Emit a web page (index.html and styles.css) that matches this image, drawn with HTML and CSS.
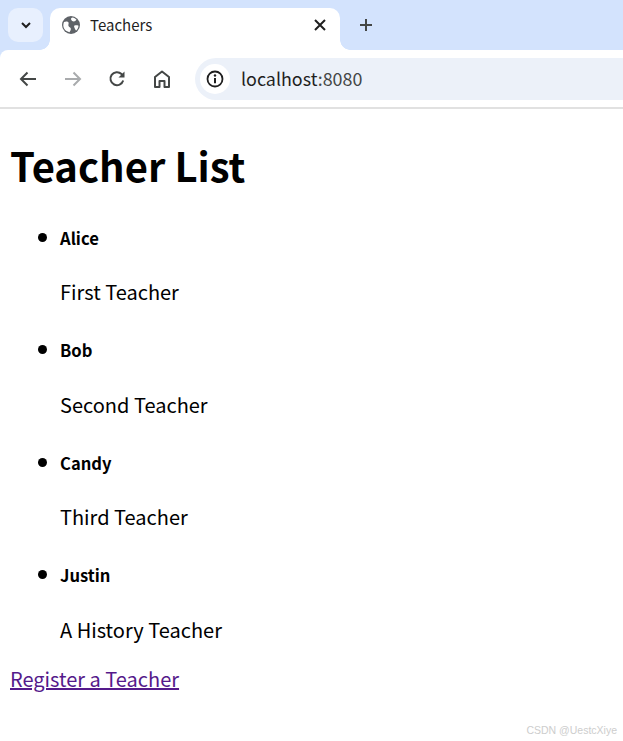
FILE: index.html
```html
<!DOCTYPE html>
<html lang="en">
<head>
<meta charset="utf-8">
<title>Teachers</title>
<link rel="stylesheet" href="styles.css">
</head>
<body>
<header class="chrome">
  <div class="tabstrip">
    <div class="tab-menu">
      <svg class="ic" width="14" height="14" viewBox="0 0 14 14"><path d="M3 5l4 4 4-4" fill="none" stroke="#1f1f1f" stroke-width="2"/></svg>
    </div>
    <div class="tab">
      <svg class="favicon" width="20" height="20" viewBox="0 0 20 20"><circle cx="10" cy="10" r="9" fill="#5f6368"/><path d="M3 7c2-1 4-.5 4.500.5S7 9.500 7.500 11s2 1 2.300 2.500-.6 2.500-1.300 3.700C5 16.500 2.500 14 2.300 10.500c0-1.300.2-2.500.7-3.500zM11.500 2.500c1.500.3 3 1.200 4 2.300-.8.800-1.500 1.700-2.700 1.700s-2.300-1-2.700-2 .4-1.700 1.400-2zM13.500 10.500c1.200-.4 2.800-.4 4 .2-.2 2-1 3.700-2.200 4.800-.8-.4-1.200-1.500-1.600-2.300s-1-2.400-.2-2.700z" fill="#fff"/></svg>
      <span class="tab-title">Teachers</span>
      <svg class="tab-close" width="12" height="12" viewBox="0 0 12 12"><path d="M1 1l10 10M11 1L1 11" stroke="#1f1f1f" stroke-width="2"/></svg>
    </div>
    <svg class="new-tab" width="14" height="14" viewBox="0 0 14 14"><path d="M7 1v12M1 7h12" stroke="#444746" stroke-width="2"/></svg>
  </div>
  <div class="toolbar">
    <svg class="tool" width="18" height="16" viewBox="0 0 18 16"><path d="M17 8H2M8.500 1.500L2 8l6.500 6.500" fill="none" stroke="#444746" stroke-width="2"/></svg>
    <svg class="tool" width="18" height="16" viewBox="0 0 18 16"><path d="M1 8h15M9.500 1.500L16 8l-6.500 6.500" fill="none" stroke="#a9abad" stroke-width="2"/></svg>
    <svg class="tool reload" width="18" height="18" viewBox="0 0 18 18"><path d="M15.200 10.500A6.500 6.500 0 1 1 13.500 4L15.500 6" fill="none" stroke="#444746" stroke-width="2"/><path d="M16.500 1.500v6h-6z" fill="#444746"/></svg>
    <svg class="tool" width="18" height="18" viewBox="0 0 18 18"><path d="M2 17V7l7-5.500L16 7v10h-4.500v-6h-5v6z" fill="none" stroke="#444746" stroke-width="2" stroke-linejoin="round"/></svg>
    <div class="omnibox">
      <span class="site-info">
        <svg width="18" height="18" viewBox="0 0 18 18"><circle cx="9" cy="9" r="7.500" fill="none" stroke="#1f1f1f" stroke-width="1.800"/><path d="M9 8v5.200" stroke="#1f1f1f" stroke-width="2"/><circle cx="9" cy="5.500" r="1.200" fill="#1f1f1f"/></svg>
      </span>
      <span class="url"><span class="host">localhost</span>:8080</span>
    </div>
  </div>
</header>
<main class="page">
  <h1>Teacher List</h1>
  <ul class="teachers">
    <li><h5>Alice</h5><p>First Teacher</p></li>
    <li><h5>Bob</h5><p>Second Teacher</p></li>
    <li><h5>Candy</h5><p>Third Teacher</p></li>
    <li><h5>Justin</h5><p>A History Teacher</p></li>
  </ul>
  <a class="register" href="#">Register a Teacher</a>
</main>
<div class="watermark">CSDN @UestcXiye</div>
</body>
</html>
```
FILE: styles.css
```css
html, body {
  margin: 0;
  padding: 0;
  background: #fff;
  height: 741px;
  overflow: hidden;
}
body {
  position: relative;
  font-family: "Noto Sans CJK SC", "Noto Sans", sans-serif;
  color: #000;
}
.chrome {
  display: block;
  border-bottom: 2px solid #e1e1e1;
  background: #d3e3fd;
}
.tabstrip {
  display: flex;
  align-items: flex-end;
  height: 50px;
}
.tab-menu {
  display: flex;
  align-items: center;
  justify-content: center;
  width: 35px;
  height: 34px;
  margin: 0 7px 8px 8px;
  border-radius: 10px;
  background: #e8f0fe;
}
.tab {
  position: relative;
  display: flex;
  align-items: center;
  width: 290px;
  height: 42px;
  box-sizing: border-box;
  padding: 0 14px 8px 11px;
  background: #fff;
  border-radius: 10px 10px 0 0;
}
.tab::before, .tab::after {
  content: "";
  position: absolute;
  bottom: 0;
  width: 10px;
  height: 10px;
}
.tab::before {
  left: -10px;
  background: radial-gradient(circle at 0 0, transparent 9.500px, #fff 10px);
}
.tab::after {
  right: -10px;
  background: radial-gradient(circle at 100% 0, transparent 9.500px, #fff 10px);
}
.favicon { flex: none; }
.tab-title {
  margin-left: 9px;
  flex: 1;
  font-size: 15px;
  line-height: 20px;
  color: #1f1f1f;
}
.new-tab { margin: 0 0 18px 19px; }
.toolbar {
  display: flex;
  align-items: center;
  height: 57px;
  box-sizing: border-box;
  padding: 0 0 0 19px;
  background: #fff;
  border-radius: 8px 0 0 0;
  overflow: hidden;
}
.tool { flex: none; margin-right: 27px; }
.reload { margin-left: -1px; }
.omnibox {
  display: flex;
  align-items: center;
  flex: none;
  width: 500px;
  height: 42px;
  margin-left: -3px;
  border-radius: 21px;
  background: #ecf1f9;
  padding-left: 5px;
}
.site-info {
  display: flex;
  align-items: center;
  justify-content: center;
  width: 30px;
  height: 30px;
  border-radius: 50%;
  background: #fff;
}
.url {
  margin-left: 11px;
  padding-bottom: 2px;
  font-size: 17.900px;
  color: #444746;
}
.host { color: #1f1f1f; }
.page {
  display: block;
  margin: 27.800px 10px 0;
}
h1 {
  margin: 0 0 32.800px;
  font-size: 40px;
  line-height: 56.300px;
  font-weight: 700;
}
.teachers {
  margin: 27.700px 0 18px;
  padding: 0 0 0 50px;
  list-style: none;
}
.teachers li {
  position: relative;
  margin-bottom: 30.700px;
}
.teachers li::before {
  content: "";
  position: absolute;
  left: -22px;
  top: 7px;
  width: 9px;
  height: 9px;
  border-radius: 50%;
  background: #000;
}
.teachers li:last-child { margin-bottom: 0; }
h5 {
  margin: 0;
  font-size: 16.600px;
  line-height: 25.900px;
  font-weight: 700;
}
.teachers p {
  margin: 24.700px 0 0;
  font-size: 20px;
  line-height: 31.200px;
}
.register {
  display: inline-block;
  font-size: 20px;
  line-height: 31.200px;
  color: #551a8b;
}
.watermark {
  position: absolute;
  right: 6px;
  bottom: 3px;
  font-family: "Liberation Sans", sans-serif;
  font-size: 10.500px;
  line-height: 16px;
  color: #cdcdcd;
}
```
